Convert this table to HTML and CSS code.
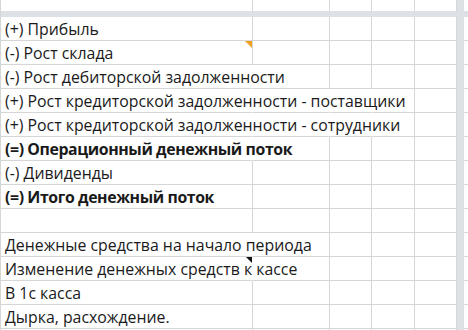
FILE: index.html
```html
<!DOCTYPE html>
<html lang="ru">
<head>
<meta charset="utf-8">
<title>Денежный поток</title>
<link rel="stylesheet" href="styles.css">
</head>
<body>
<div class="sheet">
  <div class="hband"></div>
  <div class="vband"></div>

  <div class="c top"></div><div class="c top"></div><div class="c top"></div><div class="c top"></div><div class="c top"></div><div class="c top last"></div>

  <div class="c">(+) Прибыль</div><div class="c"></div><div class="c"></div><div class="c"></div><div class="c"></div><div class="c last"></div>

  <div class="c">(-) Рост склада<span class="mark orange"></span></div><div class="c"></div><div class="c"></div><div class="c"></div><div class="c"></div><div class="c last"></div>

  <div class="c spill">(-) Рост дебиторской задолженности</div><div class="c"></div><div class="c"></div><div class="c"></div><div class="c"></div><div class="c last"></div>

  <div class="c spill">(+) Рост кредиторской задолженности - поставщики</div><div class="c spill"></div><div class="c spill"></div><div class="c"></div><div class="c"></div><div class="c last"></div>

  <div class="c spill">(+) Рост кредиторской задолженности - сотрудники</div><div class="c spill"></div><div class="c spill"></div><div class="c"></div><div class="c"></div><div class="c last"></div>

  <div class="c spill bold">(=) Операционный денежный поток</div><div class="c"></div><div class="c"></div><div class="c"></div><div class="c"></div><div class="c last"></div>

  <div class="c">(-) Дивиденды</div><div class="c"></div><div class="c"></div><div class="c"></div><div class="c"></div><div class="c last"></div>

  <div class="c bold">(=) Итого денежный поток</div><div class="c"></div><div class="c"></div><div class="c"></div><div class="c"></div><div class="c last"></div>

  <div class="c"></div><div class="c"></div><div class="c"></div><div class="c"></div><div class="c"></div><div class="c last"></div>

  <div class="c spill">Денежные средства на начало периода</div><div class="c"></div><div class="c"></div><div class="c"></div><div class="c"></div><div class="c last"></div>

  <div class="c spill">Изменение денежных средств к кассе<span class="mark black"></span></div><div class="c"></div><div class="c"></div><div class="c"></div><div class="c"></div><div class="c last"></div>

  <div class="c">В 1с касса</div><div class="c"></div><div class="c"></div><div class="c"></div><div class="c"></div><div class="c last"></div>

  <div class="c">Дырка, расхождение.</div><div class="c"></div><div class="c"></div><div class="c"></div><div class="c"></div><div class="c last"></div>

  <div class="c"></div><div class="c"></div><div class="c"></div><div class="c"></div><div class="c"></div><div class="c last"></div>
</div>
</body>
</html>
```
FILE: styles.css
```css
html, body {
  margin: 0;
  background: #ffffff;
}

.sheet {
  display: grid;
  grid-template-columns: 252px 77px 42px 43px 42px 7px 4px;
  grid-template-rows: 11px 6px repeat(14, 24px);
  border-left: 1px solid #d6d6d6;
  font-family: "Open Sans", "Noto Sans", sans-serif;
  font-size: 15.85px;
  color: #1a1a1a;
  overflow: hidden;
  height: 330px;
}

.hband {
  grid-row: 2;
  grid-column: 1 / -1;
  background: #dde1e6;
}

.vband {
  grid-row: 1 / -1;
  grid-column: 6;
  background: #dde1e6;
}

.c {
  position: relative;
  min-width: 0;
  border-right: 1px solid #d6d6d6;
  border-bottom: 1px solid #d6d6d6;
  padding: 2px 0 0 4px;
  line-height: 21px;
  white-space: nowrap;
}

.top {
  border-bottom: none;
}

.last {
  border-right: none;
}

.spill {
  border-right-color: transparent;
}

.bold {
  font-weight: 700;
  letter-spacing: -0.4px;
}

.mark {
  position: absolute;
  top: 0;
  right: 0;
  width: 0;
  height: 0;
}

.orange {
  border-top: 7px solid #f0a020;
  border-left: 7px solid transparent;
}

.black {
  border-top: 6px solid #111111;
  border-left: 6px solid transparent;
}
```
